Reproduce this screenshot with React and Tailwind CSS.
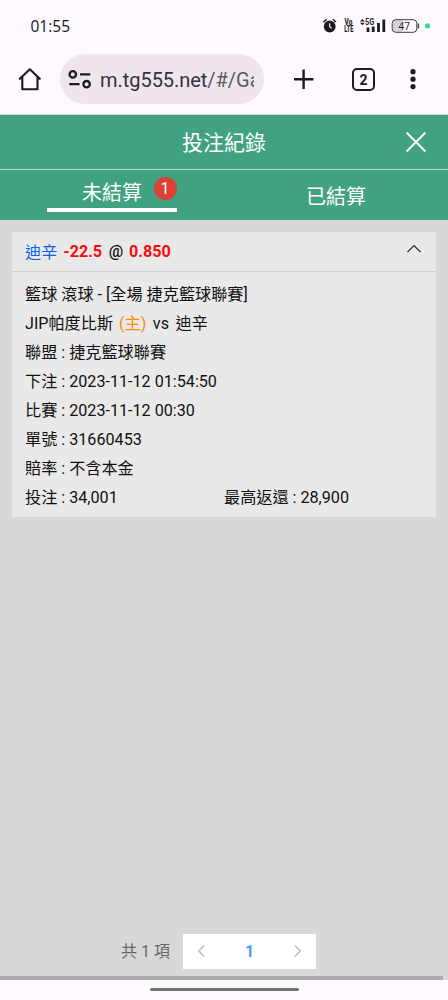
import React from "react";

function StatusBar() {
  return (
    <div className="flex h-[50px] shrink-0 items-start justify-between pl-[30.5px] pr-[17px]">
      <span className="pt-[15px] font-['Open_Sans','Noto_Sans',sans-serif] text-[15.5px] font-medium leading-[22px] text-[#17141a]">01:55</span>
      <svg width="109" height="20" viewBox="0 0 109 20" className="mt-4 font-['Roboto',sans-serif]">
        <circle cx="7.7" cy="10.5" r="5.9" fill="#1d1b20" />
        <path d="M1.4 6 4.7 3.3M10.8 3.3 14 6" stroke="#1d1b20" strokeWidth="1.5" />
        <path d="M7.7 7.2v3.6l2 1.6" stroke="#fff" strokeWidth="1.1" fill="none" />
        <text transform="translate(22.6 8.8) scale(.78 1)" fontSize="8.4" fontWeight="800" fill="#1d1b20">Vo</text>
        <text transform="translate(22.2 16.2) scale(.68 1)" fontSize="8.4" fontWeight="800" fill="#1d1b20">LTE</text>
        <path d="M38 5.4 40.4 3l2.4 2.4zM38 6.8l2.4 2.4 2.4-2.4z" fill="#1d1b20" />
        <text transform="translate(43 9) scale(.82 1)" fontSize="9" fontWeight="700" fill="#1d1b20">5G</text>
        <path d="M44.6 11.4h2.8V16h-2.8zM49.8 10.4h2.8V16h-2.8zM55.1 7h2.8v9h-2.8zM60.4 3.5h2.8V16h-2.8z" fill="#1d1b20" />
        <rect x="71" y="4.2" width="10" height="11.6" rx="3" fill="#d5d1d6" />
        <rect x="70.2" y="3.7" width="24.6" height="12.6" rx="3.6" fill="none" stroke="#3c393f" strokeWidth="1" />
        <path d="M96 7.5c1.2.5 1.2 4.5 0 5z" fill="#3c393f" stroke="#3c393f" strokeWidth=".6" />
        <text x="76.6" y="13.7" fontSize="10" fill="#1d1b20" fontFamily="Open Sans, sans-serif">47</text>
        <circle cx="105.6" cy="9.8" r="2.6" fill="#3bdc7c" />
      </svg>
    </div>
  );
}

function BrowserBar() {
  return (
    <div className="flex h-[65px] shrink-0 items-start border-b border-[#e3d3dc] pl-[18px] pt-1 text-[#1d1b20]">
      <svg width="24" height="24" viewBox="0 0 24 24" fill="none" stroke="currentColor" strokeWidth="2.1" strokeLinejoin="round" strokeLinecap="round" className="mt-[13px]">
        <path d="M1.8 11.8 11.8 2.3l10 9.5M4.3 10.2v12h15.2v-12" />
      </svg>
      <div className="ml-[18px] flex h-[50px] w-[204px] items-center rounded-full bg-[#eee6ec] pl-2">
        <svg width="24" height="22" viewBox="0 0 24 22" fill="none" stroke="currentColor" strokeWidth="2.3" className="shrink-0">
          <circle cx="4.8" cy="6.4" r="3.2" />
          <path d="M12 6.4h10.3M1.3 16.2h10.2" />
          <circle cx="18.6" cy="16.2" r="3.2" />
        </svg>
        <div className="ml-2 mt-[2px] h-[30px] w-[154px] overflow-hidden whitespace-nowrap font-['Roboto',sans-serif] text-[20px] leading-[30px] tracking-[-0.04px] text-[#35323a]">
          m.tg555.net<span className="text-[#5d5961]">/#/Ga</span>
        </div>
      </div>
      <svg width="22" height="22" viewBox="0 0 22 22" stroke="currentColor" strokeWidth="2.4" className="ml-[29px] mt-[14px]">
        <path d="M1 11.2h19.4M10.6 1.4V21" />
      </svg>
      <div className="ml-[37px] mt-[14px] flex h-[23px] w-[23px] items-center justify-center rounded-[5px] border-2 border-[#1d1b20] font-['Roboto',sans-serif] text-[14px] font-bold leading-none">2</div>
      <svg width="6" height="24" viewBox="0 0 6 24" fill="currentColor" className="ml-[35px] mt-[13px]">
        <circle cx="3" cy="4.7" r="2.6" />
        <circle cx="3" cy="12.2" r="2.6" />
        <circle cx="3" cy="19.6" r="2.6" />
      </svg>
    </div>
  );
}

function Header() {
  return (
    <div className="shrink-0 bg-[#40a280] text-white">
      <div className="grid h-[55px] grid-cols-[1fr_auto_1fr] items-center border-b border-[#b9dacd]">
        <h1 className="col-start-2 pt-[2px] text-[21px] font-normal leading-[30px]">投注紀錄</h1>
        <svg width="22" height="22" viewBox="0 0 22 22" stroke="currentColor" strokeWidth="2" className="mr-[21px] -mt-[1px] justify-self-end">
          <path d="M1.5 1.5 20.5 20.5M20.5 1.5 1.5 20.5" />
        </svg>
      </div>
      <div className="grid h-[50px] grid-cols-2 text-[20px] font-normal leading-[30px]">
        <div className="flex justify-center">
          <div className="flex h-[42px] w-[130px] items-start border-b-4 border-white pl-[35px] pt-[7px]">
            <span className="pt-[1px]">未結算</span>
            <span className="ml-[11.5px] flex h-[23px] w-[23px] shrink-0 items-center justify-center rounded-full bg-[#db4039] text-[16px] leading-none">1</span>
          </div>
        </div>
        <div className="flex items-center justify-center pt-[3px]">已結算</div>
      </div>
    </div>
  );
}

const rows = [
  "聯盟 : 捷克籃球聯賽",
  "下注 : 2023-11-12 01:54:50",
  "比賽 : 2023-11-12 00:30",
  "單號 : 31660453",
  "賠率 : 不含本金",
];

function BetCard() {
  return (
    <div className="mx-3 mt-3 h-[285px] w-[424px] bg-[#e9e9e9] text-[16.15px] leading-[29px] text-[#111]">
      <div className="flex h-10 items-center justify-between border-b border-[#cecece] pl-[13px] pr-[14px]">
        <div className="flex whitespace-pre font-bold text-[#fb0a0a]">
          <span className="pt-[1px] font-normal text-[#0a62ee]">迪辛</span>
          <span className="ml-[6px]">-22.5</span>
          <span className="ml-[6.5px] font-medium text-[#111]">@</span>
          <span className="ml-[6px]">0.850</span>
        </div>
        <svg width="16" height="10" viewBox="0 0 16 10" fill="none" stroke="#222" strokeWidth="1.2" className="-mt-[6px]">
          <path d="M1.4 8.2 8 1.6l6.6 6.6" />
        </svg>
      </div>
      <div className="whitespace-pre pl-[13px] pt-[8px]">
        <div>籃球 滾球 - [全場 捷克籃球聯賽]</div>
        <div className="flex">
          <span>JIP帕度比斯</span>
          <span className="ml-[6px] text-[#fb8c0a]">(主)</span>
          <span className="ml-[6.5px]">vs</span>
          <span className="ml-[6.5px]">迪辛</span>
        </div>
        {rows.map((row) => (
          <div key={row}>{row}</div>
        ))}
        <div className="flex">
          <span className="w-[199px]">投注 : 34,001</span>
          <span>最高返還 : 28,900</span>
        </div>
      </div>
    </div>
  );
}

function Pagination() {
  return (
    <div className="flex h-[35px] items-center pl-[121px] text-[16px] text-[#66676a]">
      <span className="w-[62px] whitespace-pre">共 1 項</span>
      <div className="flex h-[35px] w-[133px] items-center justify-between bg-white px-[14px]">
        <svg width="9" height="14" viewBox="0 0 9 14" fill="none" stroke="#b9bcc3" strokeWidth="1.4" className="-mt-[2px]">
          <path d="M7.3 1.5 1.7 7l5.6 5.5" />
        </svg>
        <span className="font-bold text-[#409eff]">1</span>
        <svg width="9" height="14" viewBox="0 0 9 14" fill="none" stroke="#b9bcc3" strokeWidth="1.4" className="-mt-[2px]">
          <path d="M1.7 1.5 7.3 7l-5.6 5.5" />
        </svg>
      </div>
    </div>
  );
}

export default function App() {
  return (
    <div className="flex h-[1000px] w-[448px] flex-col overflow-hidden bg-[#fdf9fe] font-['Roboto','Noto_Sans_CJK_TC',sans-serif]">
      <StatusBar />
      <BrowserBar />
      <Header />
      <main className="flex flex-1 flex-col justify-between bg-[#d8d8d8]">
        <BetCard />
        <div>
          <Pagination />
          <div className="mt-[7px] h-1 w-[443px] bg-[#ababab]" />
        </div>
      </main>
      <div className="flex h-5 shrink-0 justify-center pt-2">
        <div className="h-[3px] w-[149px] rounded-full bg-[#77727b]" />
      </div>
    </div>
  );
}
